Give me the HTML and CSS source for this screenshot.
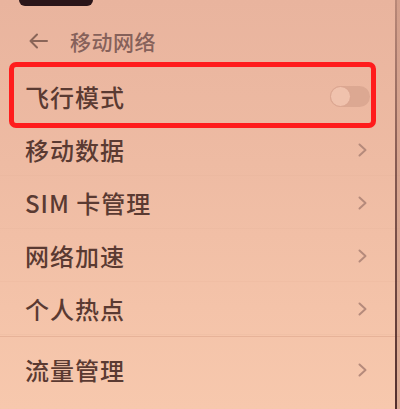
FILE: index.html
```html
<!DOCTYPE html>
<html lang="zh-CN">
<head>
<meta charset="utf-8">
<title>移动网络</title>
<link rel="stylesheet" href="styles.css">
</head>
<body>
<div class="screen">
  <div class="statusbar"><div class="notch"></div></div>
  <div class="header">
    <svg class="back" width="20" height="16" viewBox="0 0 20 16"><path d="M19 8H2.5M9 1.5L2.5 8L9 14.5" fill="none" stroke="#8a6558" stroke-width="2" stroke-linecap="round" stroke-linejoin="round"/></svg>
    <span class="title">移动网络</span>
  </div>
  <div class="list">
    <div class="row">
      <span class="label">飞行模式</span>
      <span class="toggle"><span class="knob"></span></span>
    </div>
    <div class="row line">
      <span class="label">移动数据</span>
      <svg class="chev" width="9" height="14" viewBox="0 0 9 14"><path d="M1.5 1.5L7.5 7L1.5 12.5" fill="none" stroke="#b58a7b" stroke-width="2" stroke-linecap="round" stroke-linejoin="round"/></svg>
    </div>
    <div class="row line">
      <span class="label">SIM 卡管理</span>
      <svg class="chev" width="9" height="14" viewBox="0 0 9 14"><path d="M1.5 1.5L7.5 7L1.5 12.5" fill="none" stroke="#b58a7b" stroke-width="2" stroke-linecap="round" stroke-linejoin="round"/></svg>
    </div>
    <div class="row line">
      <span class="label">网络加速</span>
      <svg class="chev" width="9" height="14" viewBox="0 0 9 14"><path d="M1.5 1.5L7.5 7L1.5 12.5" fill="none" stroke="#b58a7b" stroke-width="2" stroke-linecap="round" stroke-linejoin="round"/></svg>
    </div>
    <div class="row line">
      <span class="label">个人热点</span>
      <svg class="chev" width="9" height="14" viewBox="0 0 9 14"><path d="M1.5 1.5L7.5 7L1.5 12.5" fill="none" stroke="#b58a7b" stroke-width="2" stroke-linecap="round" stroke-linejoin="round"/></svg>
    </div>
    <div class="divider"></div>
    <div class="row">
      <span class="label">流量管理</span>
      <svg class="chev" width="9" height="14" viewBox="0 0 9 14"><path d="M1.5 1.5L7.5 7L1.5 12.5" fill="none" stroke="#b58a7b" stroke-width="2" stroke-linecap="round" stroke-linejoin="round"/></svg>
    </div>
    <div class="highlight"></div>
  </div>
  <div class="edge"></div>
</div>
</body>
</html>
```

FILE: styles.css
```css
html, body {
  margin: 0;
  padding: 0;
}
body {
  width: 400px;
  height: 409px;
  overflow: hidden;
  font-family: "Noto Sans CJK SC", "Noto Sans", sans-serif;
}
.screen {
  position: relative;
  width: 400px;
  height: 409px;
  background: linear-gradient(to bottom, #e9b49e 0%, #eebba3 40%, #f4c3a9 75%, #f7c8ad 100%);
  overflow: hidden;
}
.statusbar {
  height: 22px;
}
.notch {
  width: 74px;
  height: 6px;
  margin-left: 19px;
  background: #2a1519;
  border-radius: 0 0 8px 8px;
}
.header {
  display: flex;
  align-items: center;
  height: 38px;
  padding-left: 28px;
}
.back {
  display: block;
}
.title {
  margin-left: 22px;
  font-size: 21px;
  font-weight: 500;
  letter-spacing: 0.5px;
  color: #86615a;
  line-height: 1;
}
.list {
  position: relative;
  padding-top: 10px;
}
.row {
  display: flex;
  align-items: center;
  justify-content: space-between;
  height: 53px;
  padding: 0 33px 0 25px;
}
.row.line {
  box-shadow: inset 0 -1px 0 rgba(210, 150, 125, 0.08);
}
.label {
  font-size: 24px;
  font-weight: 500;
  letter-spacing: 1px;
  color: #5a3a32;
  line-height: 1;
}
.chev {
  display: block;
}
.toggle {
  position: relative;
  width: 40px;
  height: 21px;
  margin-right: -3px;
  border-radius: 11px;
  background: #dca892;
}
.knob {
  position: absolute;
  left: 0;
  top: 0;
  width: 19px;
  height: 19px;
  border-radius: 50%;
  background: #f0c2ad;
  border: 1px solid #dba590;
}
.divider {
  height: 1px;
  margin: 1px 0 6px;
  background: rgba(205, 145, 120, 0.35);
}
.highlight {
  position: absolute;
  left: 9px;
  top: 2px;
  width: 367px;
  height: 66px;
  box-sizing: border-box;
  border: 5px solid #ff1c1c;
  border-radius: 7px;
}
.edge {
  position: absolute;
  top: 0;
  right: 0;
  width: 5px;
  height: 100%;
  background: linear-gradient(to right, rgba(95, 55, 50, 0.35) 0 2px, rgba(170, 120, 105, 0.35) 2px 5px);
}
.edge::after {
  content: "";
  position: absolute;
  left: 0;
  top: 0;
  width: 2px;
  height: 100%;
  background: linear-gradient(to bottom, rgba(80, 40, 40, 0) 0%, rgba(80, 40, 40, 0.5) 40%, rgba(70, 35, 35, 0.9) 100%);
}
```
